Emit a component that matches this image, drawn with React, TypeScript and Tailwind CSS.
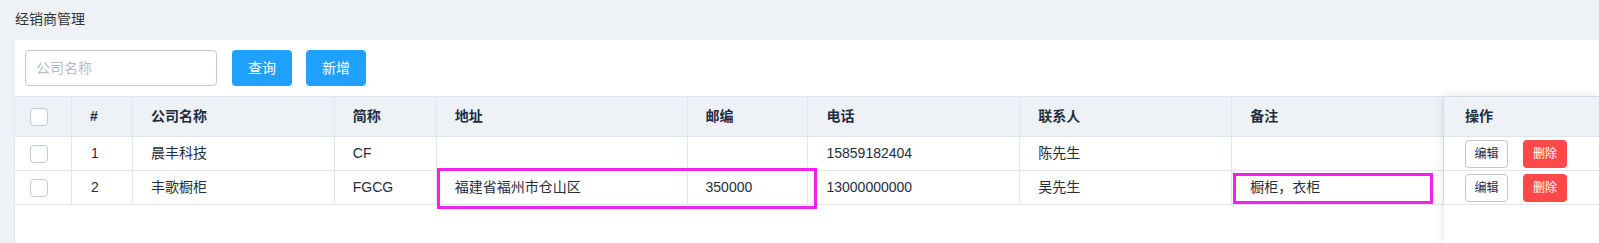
const FONT = { fontFamily: '"Liberation Sans", "Noto Sans CJK SC", sans-serif' };

interface Dealer {
  id: number;
  name: string;
  short: string;
  address: string;
  zip: string;
  phone: string;
  contact: string;
  remark: string;
}

const dealers: Dealer[] = [
  { id: 1, name: "晨丰科技", short: "CF", address: "", zip: "", phone: "15859182404", contact: "陈先生", remark: "" },
  { id: 2, name: "丰歌橱柜", short: "FGCG", address: "福建省福州市仓山区", zip: "350000", phone: "13000000000", contact: "吴先生", remark: "橱柜，衣柜" },
];

const columns = [
  { label: "公司名称", w: "w-[202px]", key: "name" },
  { label: "简称", w: "w-[102px]", key: "short" },
  { label: "地址", w: "w-[251px]", key: "address" },
  { label: "邮编", w: "w-[121px]", key: "zip" },
  { label: "电话", w: "w-[212px]", key: "phone" },
  { label: "联系人", w: "w-[212px]", key: "contact" },
  { label: "备注", w: "w-[212px]", key: "remark" },
] as const;

function Checkbox() {
  return <span className="block w-[18px] h-[18px] rounded-[4px] border border-[#bfcbd9] bg-white" />;
}

export default function App() {
  return (
    <div className="relative min-h-[243px] bg-[#eef1f6] text-[#1f2d3d] overflow-hidden" style={FONT}>
      <div className="h-[40px] pl-[15px] pt-[9px] text-[14px] text-[#333]">经销商管理</div>

      <div className="ml-[15px] bg-white min-h-[203px]">
        {/* toolbar */}
        <div className="flex items-center gap-[14px] px-[10px] pt-[10px] pb-[10px]">
          <div className="w-[192px] h-[36px] rounded-[4px] border border-[#bfcbd9] px-[10px] flex items-center text-[14px] text-[#b4bccc]">
            公司名称
          </div>
          <button className="ml-[1px] w-[60px] h-[36px] rounded-[4px] bg-[#20a0ff] text-white text-[14px]">查询</button>
          <button className="w-[60px] h-[36px] rounded-[4px] bg-[#20a0ff] text-white text-[14px]">新增</button>
        </div>

        {/* table */}
        <div className="flex border-t border-[#dfe6ec] text-[14px]">
          <div className="w-[1430px] shrink-0 border-l border-[#dfe6ec] -ml-px">
            <div className="flex h-[40px] bg-[#eef1f6] border-b border-[#dfe6ec] font-bold">
              <div className="w-[57px] border-r border-[#dfe6ec] pl-[15px] flex items-center">
                <Checkbox />
              </div>
              <div className="w-[61px] border-r border-[#dfe6ec] pl-[18px] flex items-center">#</div>
              {columns.map((c) => (
                <div key={c.key} className={`${c.w} border-r border-[#dfe6ec] pl-[18px] flex items-center`}>
                  {c.label}
                </div>
              ))}
            </div>
            {dealers.map((d) => (
              <div key={d.id} className="flex h-[34px] border-b border-[#dfe6ec]">
                <div className="w-[57px] border-r border-[#dfe6ec] pl-[15px] flex items-center">
                  <Checkbox />
                </div>
                <div className="w-[61px] border-r border-[#dfe6ec] pl-[19px] flex items-center">{d.id}</div>
                {columns.map((c) => (
                  <div key={c.key} className={`${c.w} border-r border-[#dfe6ec] pl-[18px] flex items-center`}>
                    {d[c.key]}
                  </div>
                ))}
              </div>
            ))}
          </div>

          {/* fixed right column */}
          <div className="relative z-10 flex-1 min-h-[147px] bg-white shadow-[0_0_10px_rgba(0,0,0,0.12)]">
            <div className="h-[40px] bg-[#eef1f6] border-b border-[#dfe6ec] pl-[21px] flex items-center font-bold">操作</div>
            {dealers.map((d) => (
              <div key={d.id} className="h-[34px] border-b border-[#dfe6ec] pl-[21px] flex items-center gap-[15px]">
                <button className="w-[43px] h-[28px] rounded-[4px] border border-[#c4c4c4] bg-white text-[12px] text-[#1f2d3d]">
                  编辑
                </button>
                <button className="w-[44px] h-[28px] rounded-[4px] bg-[#ff4949] text-white text-[12px]">删除</button>
              </div>
            ))}
          </div>
        </div>
      </div>

      {/* annotation boxes */}
      <div className="absolute left-[437px] top-[168px] w-[380px] h-[41px] border-[3px] border-[#f222ee] pointer-events-none" />
      <div className="absolute left-[1233px] top-[173px] w-[200px] h-[31px] border-[3px] border-[#f222ee] pointer-events-none" />
    </div>
  );
}
